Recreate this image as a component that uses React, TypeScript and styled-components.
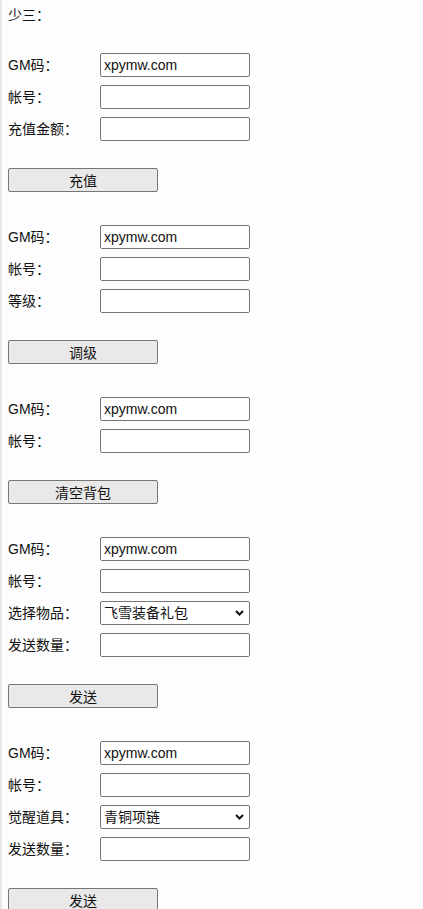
import React from "react";
import styled, { createGlobalStyle } from "styled-components";

const Global = createGlobalStyle`
  html, body { margin: 0; padding: 0; background: #fdfdfd; }
  body {
    font-family: "Liberation Sans", "Noto Sans CJK SC", sans-serif;
    font-size: 14px;
    color: #111;
  }
`;

const Page = styled.div`
  border-left: 2px solid #e8e8e8;
  padding: 6px 0 0 6px;
  min-height: 909px;
  box-sizing: border-box;
`;

const Title = styled.div`
  height: 18px;
  line-height: 18px;
  margin-bottom: 29px;
`;

const Form = styled.form`
  display: flex;
  flex-direction: column;
  gap: 8px;
  margin-bottom: 33px;
`;

const Row = styled.div`
  display: flex;
  align-items: center;
  height: 24px;
`;

const Label = styled.label`
  width: 92px;
  flex: none;
  line-height: 18px;
`;

const Input = styled.input`
  box-sizing: border-box;
  width: 150px;
  height: 24px;
  margin: 0;
  padding: 0 3px;
  border: 1px solid #767676;
  border-radius: 2px;
  background: #fff;
  font-family: "Liberation Sans", "Noto Sans CJK SC", sans-serif;
  font-size: 14px;
  color: #111;
  outline: none;
`;

const SelectWrap = styled.div`
  position: relative;
  width: 150px;
  height: 24px;
`;

const Select = styled.select`
  appearance: none;
  box-sizing: border-box;
  width: 150px;
  height: 24px;
  margin: 0;
  padding: 0 3px;
  border: 1px solid #767676;
  border-radius: 2px;
  background: #fff;
  font-family: "Liberation Sans", "Noto Sans CJK SC", sans-serif;
  font-size: 14px;
  color: #111;
  outline: none;
`;

const Chevron = styled.svg`
  position: absolute;
  right: 6px;
  top: 9px;
  pointer-events: none;
`;

const Button = styled.button`
  box-sizing: border-box;
  width: 150px;
  height: 24px;
  margin: 19px 0 0;
  padding: 0;
  border: 1px solid #767676;
  border-radius: 2px;
  background: #e9e9e9;
  font-family: "Liberation Sans", "Noto Sans CJK SC", sans-serif;
  font-size: 14px;
  color: #111;
`;

type Field =
  | { kind: "input"; label: string; value?: string }
  | { kind: "select"; label: string; value: string };

const blocks: { fields: Field[]; button: string }[] = [
  {
    fields: [
      { kind: "input", label: "GM码：", value: "xpymw.com" },
      { kind: "input", label: "帐号：" },
      { kind: "input", label: "充值金额：" },
    ],
    button: "充值",
  },
  {
    fields: [
      { kind: "input", label: "GM码：", value: "xpymw.com" },
      { kind: "input", label: "帐号：" },
      { kind: "input", label: "等级：" },
    ],
    button: "调级",
  },
  {
    fields: [
      { kind: "input", label: "GM码：", value: "xpymw.com" },
      { kind: "input", label: "帐号：" },
    ],
    button: "清空背包",
  },
  {
    fields: [
      { kind: "input", label: "GM码：", value: "xpymw.com" },
      { kind: "input", label: "帐号：" },
      { kind: "select", label: "选择物品：", value: "飞雪装备礼包" },
      { kind: "input", label: "发送数量：" },
    ],
    button: "发送",
  },
  {
    fields: [
      { kind: "input", label: "GM码：", value: "xpymw.com" },
      { kind: "input", label: "帐号：" },
      { kind: "select", label: "觉醒道具：", value: "青铜项链" },
      { kind: "input", label: "发送数量：" },
    ],
    button: "发送",
  },
];

export default function App() {
  return (
    <>
      <Global />
      <Page>
        <Title>少三：</Title>
        {blocks.map((b, i) => (
          <Form key={i} onSubmit={(e) => e.preventDefault()}>
            {b.fields.map((f, j) => (
              <Row key={j}>
                <Label>{f.label}</Label>
                {f.kind === "input" ? (
                  <Input defaultValue={f.value ?? ""} />
                ) : (
                  <SelectWrap>
                    <Select defaultValue={f.value}>
                      <option value={f.value}>{f.value}</option>
                    </Select>
                    <Chevron width="9" height="6" viewBox="0 0 9 6">
                      <path d="M1 1 L4.5 4.5 L8 1" fill="none" stroke="#111" strokeWidth="2" />
                    </Chevron>
                  </SelectWrap>
                )}
              </Row>
            ))}
            <Button type="button">{b.button}</Button>
          </Form>
        ))}
      </Page>
    </>
  );
}
